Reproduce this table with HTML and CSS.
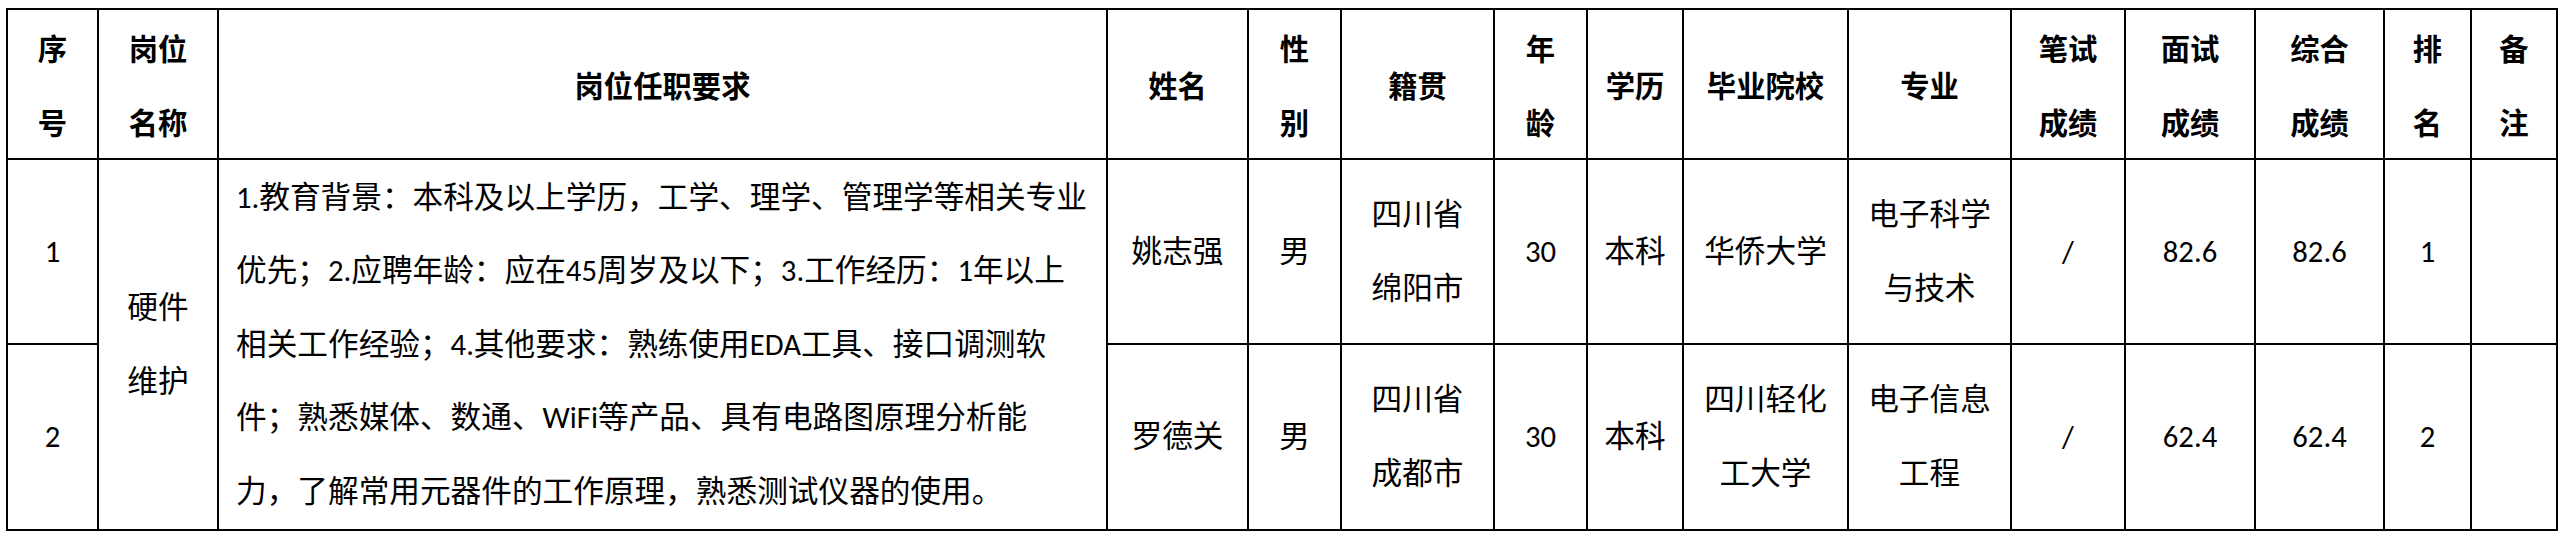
FILE: index.html
```html
<!DOCTYPE html>
<html lang="zh-CN">
<head>
<meta charset="utf-8">
<title>岗位拟聘人员名单</title>
<link rel="stylesheet" href="styles.css">
</head>
<body>
<div class="sheet">
  <div class="cell head">序<br>号</div>
  <div class="cell head">岗位<br>名称</div>
  <div class="cell head">岗位任职要求</div>
  <div class="cell head">姓名</div>
  <div class="cell head">性<br>别</div>
  <div class="cell head">籍贯</div>
  <div class="cell head">年<br>龄</div>
  <div class="cell head">学历</div>
  <div class="cell head">毕业院校</div>
  <div class="cell head">专业</div>
  <div class="cell head">笔试<br>成绩</div>
  <div class="cell head">面试<br>成绩</div>
  <div class="cell head">综合<br>成绩</div>
  <div class="cell head">排<br>名</div>
  <div class="cell head">备<br>注</div>

  <div class="cell">1</div>
  <div class="cell span2">硬件<br>维护</div>
  <div class="cell desc span2">1.教育背景：本科及以上学历，工学、理学、管理学等相关专业<br>优先；2.应聘年龄：应在45周岁及以下；3.工作经历：1年以上<br>相关工作经验；4.其他要求：熟练使用EDA工具、接口调测软<br>件；熟悉媒体、数通、WiFi等产品、具有电路图原理分析能<br>力，了解常用元器件的工作原理，熟悉测试仪器的使用。</div>
  <div class="cell">姚志强</div>
  <div class="cell">男</div>
  <div class="cell">四川省<br>绵阳市</div>
  <div class="cell">30</div>
  <div class="cell">本科</div>
  <div class="cell">华侨大学</div>
  <div class="cell">电子科学<br>与技术</div>
  <div class="cell">/</div>
  <div class="cell">82.6</div>
  <div class="cell">82.6</div>
  <div class="cell">1</div>
  <div class="cell"></div>

  <div class="cell">2</div>
  <div class="cell">罗德关</div>
  <div class="cell">男</div>
  <div class="cell">四川省<br>成都市</div>
  <div class="cell">30</div>
  <div class="cell">本科</div>
  <div class="cell">四川轻化<br>工大学</div>
  <div class="cell">电子信息<br>工程</div>
  <div class="cell">/</div>
  <div class="cell">62.4</div>
  <div class="cell">62.4</div>
  <div class="cell">2</div>
  <div class="cell"></div>
</div>
</body>
</html>
```

FILE: styles.css
```css
html, body {
  margin: 0;
  padding: 0;
  background: #ffffff;
}

body {
  padding: 8px 0 0 6px;
  font-family: Carlito, "Noto Sans CJK SC", sans-serif;
  color: #000000;
}

.sheet {
  display: grid;
  grid-template-columns: 89px 118px 887px 139px 91px 151px 91px 94px 163px 161px 112px 128px 127px 85px 84px;
  grid-template-rows: 148px 183px 184px;
  gap: 2px;
  padding: 2px;
  background: #000000;
  width: max-content;
}

.cell {
  background: #ffffff;
  display: flex;
  align-items: center;
  justify-content: center;
  text-align: center;
  font-size: 30.67px;
  line-height: 73.6px;
  white-space: nowrap;
  overflow: visible;
}

.head {
  font-family: "Noto Sans CJK SC", sans-serif;
  font-size: 29.33px;
  font-weight: 600;
  line-height: 74px;
}

.span2 {
  grid-row: span 2;
}

.desc {
  justify-content: flex-start;
  text-align: left;
  padding-left: 17px;
}
```
